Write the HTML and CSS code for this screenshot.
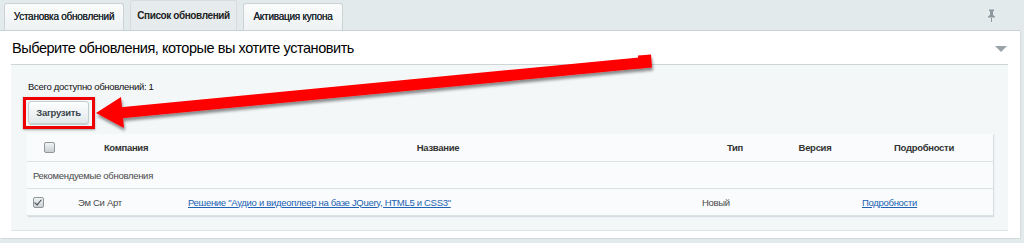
FILE: index.html
```html
<!DOCTYPE html>
<html lang="ru">
<head>
<meta charset="utf-8">
<title>Обновления</title>
<link rel="stylesheet" href="styles.css">
</head>
<body>
<div class="tabs">
  <div class="tab t1">Установка обновлений</div>
  <div class="tab t2 active">Список обновлений</div>
  <div class="tab t3">Активация купона</div>
  <div class="pin">
    <svg width="9" height="13" viewBox="0 0 9 13"><path d="M2 0.5h5v1.5H6v4l2 1.5v1H1v-1l2-1.5V2H2z" fill="#8e999f"/><rect x="4" y="9" width="1" height="4" fill="#8e999f"/></svg>
  </div>
</div>
<div class="panel">
  <div class="panel-head">
    <h1 class="title">Выберите обновления, которые вы хотите установить</h1>
    <span class="toggle"></span>
  </div>
  <div class="inner">
    <div class="total">Всего доступно обновлений: 1</div>
    <div class="btn-wrap"><span class="mark"><button class="btn">Загрузить</button></span></div>
    <table class="grid">
      <colgroup>
        <col class="c-check"><col class="c-company"><col class="c-name"><col class="c-type"><col class="c-ver"><col class="c-more">
      </colgroup>
      <thead>
        <tr>
          <th><span class="cb"></span></th>
          <th>Компания</th>
          <th>Название</th>
          <th>Тип</th>
          <th>Версия</th>
          <th>Подробности</th>
        </tr>
      </thead>
      <tbody>
        <tr class="group"><td colspan="6">Рекомендуемые обновления</td></tr>
        <tr>
          <td><span class="cb checked"></span></td>
          <td>Эм Си Арт</td>
          <td><a href="#">Решение "Аудио и видеоплеер на базе JQuery, HTML5 и CSS3"</a></td>
          <td>Новый</td>
          <td></td>
          <td><a href="#">Подробности</a></td>
        </tr>
      </tbody>
    </table>
  </div>
</div>
<svg class="arrow" width="1024" height="243" viewBox="0 0 1024 243">
  <defs>
    <filter id="sh" x="-5%" y="-20%" width="110%" height="150%">
      <feGaussianBlur in="SourceAlpha" stdDeviation="1.5"/>
      <feOffset dx="1" dy="3" result="b"/>
      <feComponentTransfer><feFuncA type="linear" slope="0.45"/></feComponentTransfer>
      <feMerge><feMergeNode/><feMergeNode in="SourceGraphic"/></feMerge>
    </filter>
  </defs>
  <g filter="url(#sh)" fill="#ff0000">
    <polygon points="118,107.5 644,57 645,68 119,118.5"/>
    <polygon points="638,55.5 651,54.5 652,67.5 639,68.5"/>
    <polygon points="96,113 121,97 124,128"/>
  </g>
</svg>
</body>
</html>
```
FILE: styles.css
```css
html, body {
  margin: 0;
  padding: 0;
}
body {
  background: #e3eaeb;
  font-family: "Liberation Sans", Arial, sans-serif;
  font-size: 9.5px;
  letter-spacing: -0.3px;
  color: #333;
  width: 1024px;
  height: 243px;
  overflow: hidden;
  position: relative;
}
.tabs {
  display: flex;
  align-items: flex-end;
  height: 30px;
  padding-left: 4px;
  gap: 6px;
}
.tab {
  box-sizing: border-box;
  height: 27px;
  line-height: 26px;
  text-align: center;
  border: 1px solid #cbd3d5;
  border-bottom: none;
  border-radius: 3px 3px 0 0;
  background: linear-gradient(#fbfcfc, #eef2f3);
  color: #1f282e;
  font-size: 10px;
  letter-spacing: -0.25px;
  text-shadow: 0 0 0.3px #1f282e;
}
.t1 { width: 120px; }
.t2 { width: 107px; }
.t3 { width: 100px; }
.tab.active {
  height: 30px;
  line-height: 29px;
  background: #e6eced;
  border-color: #d6dcde;
  font-weight: bold;
  color: #222;
  letter-spacing: -0.4px;
  text-shadow: none;
}
.pin {
  margin-left: auto;
  margin-right: 28px;
  align-self: center;
  height: 13px;
}
.pin svg { display: block; }
.panel {
  width: 997px;
  background: #fff;
  border-top: 1px solid #c9d2d4;
  box-shadow: 1px 1px 0 #d2dadc;
  padding: 0 12px 8px 11px;
  box-sizing: content-box;
  height: 199px;
}
.panel-head {
  display: flex;
  align-items: center;
  justify-content: space-between;
  height: 33px;
}
.title {
  margin: 0 0 0 1px;
  font-size: 14.5px;
  letter-spacing: -0.45px;
  font-weight: normal;
  color: #000;
}
.toggle {
  width: 0;
  height: 0;
  border-left: 6px solid transparent;
  border-right: 6px solid transparent;
  border-top: 6px solid #9aa3a7;
  margin-right: 1px;
  margin-top: 2px;
}
.inner {
  background: #f4f7f8;
  border-top: 1px solid #cdd5d7;
  box-shadow: 0 1px 0 #dde4e6;
  padding: 15px 15px 13px 16px;
  height: 137px;
}
.total {
  line-height: 13px;
  color: #111;
  margin-left: 1px;
}
.btn-wrap {
  margin-top: 4px;
  height: 32px;
}
.mark {
  display: inline-block;
  border: 3px solid #ee0000;
  padding: 1px 3px 2px 2px;
  margin-left: -4px;
  box-shadow: 0 1px 2px rgba(0,0,0,0.35);
}
.btn {
  display: block;
  height: 23px;
  width: 61px;
  padding: 0;
  border: 1px solid #c3cccf;
  border-radius: 3px;
  background: linear-gradient(#fdfefe, #e2e8ea);
  box-shadow: 0 1px 1px rgba(0,0,0,0.18);
  font-family: "Liberation Sans", Arial, sans-serif;
  font-size: 9.5px;
  letter-spacing: -0.3px;
  font-weight: bold;
  color: #3b464d;
}
.grid {
  margin-top: 5px;
  width: 966px;
  border-collapse: collapse;
  background: #f9fbfc;
  box-shadow: 1px 1px 1px #d6dde0;
  table-layout: fixed;
}
.c-check { width: 44px; }
.c-company { width: 110px; }
.c-name { width: 514px; }
.c-type { width: 80px; }
.c-ver { width: 80px; }
.c-more { width: 138px; }
.grid th {
  height: 27px;
  padding: 0;
  font-weight: bold;
  color: #333;
  text-align: center;
  border-bottom: 1px solid #dbe2e4;
  vertical-align: middle;
}
.grid td {
  height: 26px;
  padding: 0 0 0 7px;
  color: #4a4a4a;
  border-bottom: 1px solid #dbe2e4;
  vertical-align: middle;
}
.grid td:first-child { padding-left: 6px; }
.grid a {
  color: #2162b3;
  text-decoration: underline;
}
.cb {
  display: inline-block;
  width: 9px;
  height: 9px;
  border: 1px solid #8f979b;
  border-radius: 2px;
  background: linear-gradient(#f2f4f5, #c9cfd2);
  vertical-align: middle;
  position: relative;
}
.cb.checked::after {
  content: "";
  position: absolute;
  left: 2px;
  top: 0px;
  width: 3px;
  height: 6px;
  border: solid #3d4448;
  border-width: 0 1.5px 1.5px 0;
  transform: rotate(40deg);
}
.arrow {
  position: absolute;
  left: 0;
  top: 0;
  pointer-events: none;
}
```
